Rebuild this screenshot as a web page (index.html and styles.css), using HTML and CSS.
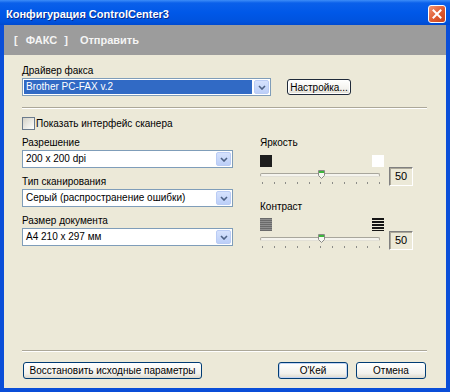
FILE: index.html
```html
<!DOCTYPE html>
<html>
<head>
    <meta charset="utf-8">
    <link rel="stylesheet" href="styles.css">
</head>
<body>
<div class="window">
    <div class="titlebar">
        <span class="title">Конфигурация ControlCenter3</span>
        <span class="close">
            <svg width="10" height="10" viewBox="0 0 10 10"><path d="M1.5 1.5 L8.5 8.5 M8.5 1.5 L1.5 8.5" stroke="#fff" stroke-width="2" fill="none" stroke-linecap="square"/></svg>
        </span>
    </div>

    <div class="client">
        <div class="tabbar">
            <span class="bracket">[</span><span class="tab-active">ФАКС</span><span class="bracket">]</span>
            <span class="tab">Отправить</span>
        </div>

        <div class="panel">
            <div class="label">Драйвер факса</div>
            <div class="driver-row">
                <div class="combo combo-driver selected">
                    <span class="combo-text">Brother PC-FAX v.2</span>
                    <span class="combo-btn"><svg width="8" height="5" viewBox="0 0 8 5"><polyline points="1,1 4,4 7,1" stroke="#4D6185" stroke-width="1.6" fill="none"/></svg></span>
                </div>
                <button class="btn btn-focus btn-setup">Настройка...</button>
            </div>

            <div class="sep"></div>

            <div class="check"><span class="box"></span>Показать интерфейс сканера</div>

            <div class="settings">
                <div class="col-left">
                    <div class="field">
                        <div class="label">Разрешение</div>
                        <div class="combo">
                            <span class="combo-text">200 x 200 dpi</span>
                            <span class="combo-btn"><svg width="8" height="5" viewBox="0 0 8 5"><polyline points="1,1 4,4 7,1" stroke="#4D6185" stroke-width="1.6" fill="none"/></svg></span>
                        </div>
                    </div>
                    <div class="field">
                        <div class="label">Тип сканирования</div>
                        <div class="combo">
                            <span class="combo-text">Серый (распространение ошибки)</span>
                            <span class="combo-btn"><svg width="8" height="5" viewBox="0 0 8 5"><polyline points="1,1 4,4 7,1" stroke="#4D6185" stroke-width="1.6" fill="none"/></svg></span>
                        </div>
                    </div>
                    <div class="field">
                        <div class="label">Размер документа</div>
                        <div class="combo">
                            <span class="combo-text">A4 210 x 297 мм</span>
                            <span class="combo-btn"><svg width="8" height="5" viewBox="0 0 8 5"><polyline points="1,1 4,4 7,1" stroke="#4D6185" stroke-width="1.6" fill="none"/></svg></span>
                        </div>
                    </div>
                </div>

                <div class="col-right">
                    <div class="slider-group">
                        <div class="label">Яркость</div>
                        <div class="slider-row">
                            <div class="slider">
                                <div class="slider-icons icons-bright"><span class="sq-black"></span><span class="sq-white"></span></div>
                                <div class="track-wrap">
                                    <div class="track"></div>
                                    <svg class="thumb" width="7" height="9" viewBox="0 0 7 9"><polygon points="0.5,0.5 6.5,0.5 6.5,5.5 3.5,8.5 0.5,5.5" fill="#F7F7F2" stroke="#8A8A86"/><rect x="1" y="1" width="5" height="2" fill="#3DB53D"/></svg>
                                </div>
                                <div class="ticks"><i></i><i></i><i></i><i></i><i></i><i></i><i></i><i></i><i></i><i></i><i></i></div>
                            </div>
                            <div class="value">50</div>
                        </div>
                    </div>
                    <div class="slider-group group-contrast">
                        <div class="label">Контраст</div>
                        <div class="slider-row">
                            <div class="slider">
                                <div class="slider-icons icons-contrast"><span class="stripe-gray"></span><span class="stripe-black"></span></div>
                                <div class="track-wrap">
                                    <div class="track"></div>
                                    <svg class="thumb" width="7" height="9" viewBox="0 0 7 9"><polygon points="0.5,0.5 6.5,0.5 6.5,5.5 3.5,8.5 0.5,5.5" fill="#F7F7F2" stroke="#8A8A86"/><rect x="1" y="1" width="5" height="2" fill="#3DB53D"/></svg>
                                </div>
                                <div class="ticks"><i></i><i></i><i></i><i></i><i></i><i></i><i></i><i></i><i></i><i></i><i></i></div>
                            </div>
                            <div class="value">50</div>
                        </div>
                    </div>
                </div>
            </div>
        </div>

        <div class="footer">
            <div class="sep"></div>
            <div class="buttons">
                <button class="btn btn-restore">Восстановить исходные параметры</button>
                <span class="spacer"></span>
                <button class="btn btn-default btn-ok">O'Кей</button>
                <button class="btn btn-cancel">Отмена</button>
            </div>
        </div>
    </div>
</div>
</body>
</html>
```

FILE: styles.css
```css
body {
    margin: 0;
    font-family: "Liberation Sans", Arial, sans-serif;
    font-size: 10px;
    color: #000;
}

.window {
    width: 450px;
    height: 392px;
    background: #0A4ED8;
    display: flex;
    flex-direction: column;
}

/* title bar */
.titlebar {
    height: 25px;
    flex: none;
    box-sizing: border-box;
    padding: 3px 4px 0 6px;
    display: flex;
    align-items: center;
    justify-content: space-between;
    background: linear-gradient(#3D8DF8 0, #0A60EA 3px, #0058E8 50%, #0053DE 85%, #004AD0 100%);
}

.title {
    color: #fff;
    font-weight: bold;
    font-size: 11px;
    text-shadow: 1px 1px 0 #0A2A8A;
}

.close {
    width: 18px;
    height: 18px;
    box-sizing: border-box;
    border: 1px solid #fff;
    border-radius: 3px;
    background: linear-gradient(135deg, #F39472, #DE5A30 55%, #C8451E);
    display: flex;
    align-items: center;
    justify-content: center;
}

/* client area */
.client {
    flex: 1;
    margin: 0 4px 4px;
    background: #ECE9D8;
    display: flex;
    flex-direction: column;
}

.tabbar {
    height: 30px;
    flex: none;
    background: #9C9C9C;
    color: #F4F4F4;
    font-weight: bold;
    font-size: 11px;
    display: flex;
    align-items: center;
    padding-left: 9px;
}

.bracket {
    padding: 0 1px;
}

.tab-active {
    margin: 0 6px 0 7px;
}

.tab {
    margin-left: 11px;
}

.panel {
    padding: 9px 19px 0 18px;
}

.label {
    height: 14px;
    line-height: 13px;
    white-space: nowrap;
}

/* combo boxes */
.combo {
    height: 18px;
    box-sizing: border-box;
    border: 1px solid #7F9DB9;
    background: #fff;
    display: flex;
    align-items: stretch;
}

.combo-text {
    flex: 1;
    padding-left: 3px;
    line-height: 16px;
    white-space: nowrap;
    overflow: hidden;
}

.selected .combo-text {
    margin: 1px;
    line-height: 14px;
    padding-left: 2px;
    background: #316AC5;
    color: #fff;
}

.combo-btn {
    width: 15px;
    margin: 1px;
    box-sizing: border-box;
    border: 1px solid #BACCF5;
    border-radius: 2px;
    background: linear-gradient(#D6E2FD, #BCCFF8);
    display: flex;
    align-items: center;
    justify-content: center;
}

.driver-row {
    display: flex;
    align-items: center;
}

.combo-driver {
    width: 249px;
}

/* buttons */
.btn {
    font-family: inherit;
    font-size: 10px;
    color: #000;
    height: 17px;
    padding: 0;
    box-sizing: border-box;
    border: 1px solid #003C74;
    border-radius: 3px;
    background: linear-gradient(#FFFFFF, #F2F1EC 70%, #DCD8CC);
}

.btn-focus {
    border-color: #1F2A3A;
    box-shadow: inset 0 0 0 1px #fff;
}

.btn-default {
    box-shadow: inset 0 0 0 1px #C2D4F4;
}

.btn-setup {
    width: 64px;
    height: 16px;
    margin-left: 16px;
}

.sep {
    height: 0;
    border-top: 1px solid #ACA899;
    border-bottom: 1px solid #FFFFFF;
}

.panel .sep {
    margin-top: 11px;
}

/* checkbox */
.check {
    margin-top: 8px;
    height: 13px;
    display: flex;
    align-items: center;
    white-space: nowrap;
}

.box {
    width: 13px;
    height: 13px;
    box-sizing: border-box;
    border: 1px solid #6B7B8C;
    background: linear-gradient(135deg, #D4D2C8, #F6F6F2 80%, #fff);
    margin-right: 1px;
}

/* settings columns */
.settings {
    margin-top: 6px;
    display: grid;
    grid-template-columns: 211px 154px;
    column-gap: 27px;
}

.field {
    margin-bottom: 7px;
}

.slider-row {
    display: flex;
    align-items: flex-end;
}

.slider {
    width: 124px;
}

.slider-icons {
    display: flex;
    justify-content: space-between;
}

.icons-bright {
    margin-top: 5px;
    height: 12px;
}

.sq-black {
    width: 12px;
    height: 12px;
    background: #1E1E1E;
}

.sq-white {
    width: 12px;
    height: 12px;
    background: #fff;
}

.group-contrast .label {
    margin-top: 14px;
}

.icons-contrast {
    margin-top: 4px;
    height: 13px;
}

.stripe-gray {
    width: 12px;
    height: 13px;
    background: repeating-linear-gradient(#6A6A6A 0 1px, #8E8E8E 1px 2px);
}

.stripe-black {
    width: 12px;
    height: 13px;
    background: repeating-linear-gradient(#151515 0 2px, transparent 2px 3px);
}

.track-wrap {
    position: relative;
    height: 14px;
    padding-top: 6px;
    box-sizing: border-box;
}

.track {
    width: 120px;
    height: 4px;
    box-sizing: border-box;
    border: 1px solid #A8A69C;
    border-bottom-color: #E2E0D6;
    border-radius: 2px;
    background: #F5F4EE;
}

.thumb {
    position: absolute;
    left: 58px;
    top: 3px;
}

.ticks {
    height: 5px;
    display: flex;
    justify-content: space-between;
    padding: 0 4px 0 2px;
}

.ticks i {
    width: 1px;
    height: 2px;
    margin-top: 1px;
    background: #8C8C88;
}

.value {
    width: 24px;
    height: 19px;
    margin-left: 5px;
    box-sizing: border-box;
    border: 1px solid #fff;
    border-top-color: #808080;
    border-left-color: #808080;
    box-shadow: inset 1px 1px 0 #ACA899;
    line-height: 17px;
    text-align: center;
    font-size: 11px;
}

/* footer */
.footer {
    margin-top: auto;
    padding: 0 19px 9px 18px;
}

.footer .sep {
    margin-bottom: 10px;
}

.buttons {
    display: flex;
    align-items: center;
    padding-left: 1px;
    padding-right: 1px;
}

.spacer {
    flex: 1;
}

.btn-restore {
    width: 179px;
}

.btn-ok,
.btn-cancel {
    width: 70px;
}

.btn-cancel {
    margin-left: 8px;
}
```
